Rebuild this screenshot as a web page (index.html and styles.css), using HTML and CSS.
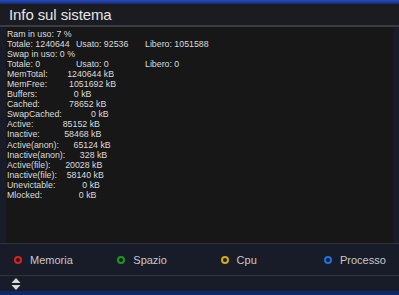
FILE: index.html
```html
<!DOCTYPE html>
<html lang="it">
  <head>
    <meta charset="UTF-8" />
    <title>Info sul sistema</title>
    <link rel="stylesheet" href="styles.css">
  </head>
  <body>
    <div class="screen">
      <div class="topbar"></div>
      <header class="title">Info sul sistema</header>
      <div class="rule"></div>

      <div class="content">
        <div class="info">
          <div class="line">Ram in uso: 7 %</div>
          <div class="line cols"><span>Totale: 1240644</span><span>Usato: 92536</span><span>Libero: 1051588</span></div>
          <div class="line">Swap in uso: 0 %</div>
          <div class="line cols"><span>Totale: 0</span><span>Usato: 0</span><span>Libero: 0</span></div>
          <!-- meminfo dump, spacing kept as in /proc/meminfo -->
          <div class="line pre">MemTotal:        1240644 kB</div>
          <div class="line pre">MemFree:         1051692 kB</div>
          <div class="line pre">Buffers:               0 kB</div>
          <div class="line pre">Cached:            78652 kB</div>
          <div class="line pre">SwapCached:            0 kB</div>
          <div class="line pre">Active:            85152 kB</div>
          <div class="line pre">Inactive:          58468 kB</div>
          <div class="line pre">Active(anon):      65124 kB</div>
          <div class="line pre">Inactive(anon):      328 kB</div>
          <div class="line pre">Active(file):      20028 kB</div>
          <div class="line pre">Inactive(file):    58140 kB</div>
          <div class="line pre">Unevictable:           0 kB</div>
          <div class="line pre">Mlocked:               0 kB</div>
        </div>
      </div>

      <div class="legend">
        <div class="key"><span class="dot red"></span>Memoria</div>
        <div class="key"><span class="dot green"></span>Spazio</div>
        <div class="key"><span class="dot yellow"></span>Cpu</div>
        <div class="key"><span class="dot blue"></span>Processo</div>
      </div>

      <div class="footer">
        <svg class="updown" width="10" height="12" viewBox="0 0 10 12">
          <path d="M5 0 L9.5 5 L0.5 5 Z" fill="#d8d8d8"/>
          <path d="M5 12 L9.5 7 L0.5 7 Z" fill="#d8d8d8"/>
        </svg>
      </div>
      <div class="bottombar"></div>
    </div>
  </body>
</html>
```

FILE: styles.css
```css
html,
body {
  margin: 0;
  padding: 0;
  background: #171a24;
}

.screen {
  width: 399px;
  height: 295px;
  display: flex;
  flex-direction: column;
  font-family: 'Liberation Sans', Arial, sans-serif;
  color: #e2e2e2;
  overflow: hidden;
}

.topbar {
  height: 4px;
  background: linear-gradient(to bottom, #2a4cb8, #142a78);
}

.title {
  height: 21px;
  background: #1a1c22;
  font-size: 15px;
  line-height: 22px;
  padding-left: 9px;
  color: #e6e6e6;
  letter-spacing: -0.1px;
}

.rule {
  height: 2px;
  background: #3a3c42;
}

.content {
  height: 216px;
  background: #181c28;
  padding: 0 6px;
  box-sizing: border-box;
}

.info {
  height: 100%;
  background: #171717;
  padding: 2px 0 0 1px;
  box-sizing: border-box;
  font-size: 8.8px;
  color: #dcdcdc;
}

.line {
  height: 10.06px;
  line-height: 10px;
  white-space: nowrap;
}

.pre {
  white-space: pre;
}

.cols {
  display: grid;
  grid-template-columns: 69px 69px auto;
}

.legend {
  height: 31px;
  border-top: 1px solid #30333b;
  border-bottom: 1px solid #30333b;
  background: #181c28;
  display: grid;
  grid-template-columns: repeat(4, 103.3px);
  padding-left: 14px;
  align-items: center;
  font-size: 11px;
  color: #c8c8c8;
}

.key {
  display: flex;
  align-items: center;
  gap: 8px;
}

.dot {
  width: 4px;
  height: 4px;
  border-radius: 50%;
  border: 2px solid;
}

.red { border-color: #e0201c; }
.green { border-color: #1c9a1c; }
.yellow { border-color: #d8a810; }
.blue { border-color: #2070e0; }

.footer {
  height: 15px;
  background: #181c28;
  display: flex;
  align-items: center;
  padding-left: 11px;
}

.bottombar {
  height: 4px;
  background: #10286a;
}
```
